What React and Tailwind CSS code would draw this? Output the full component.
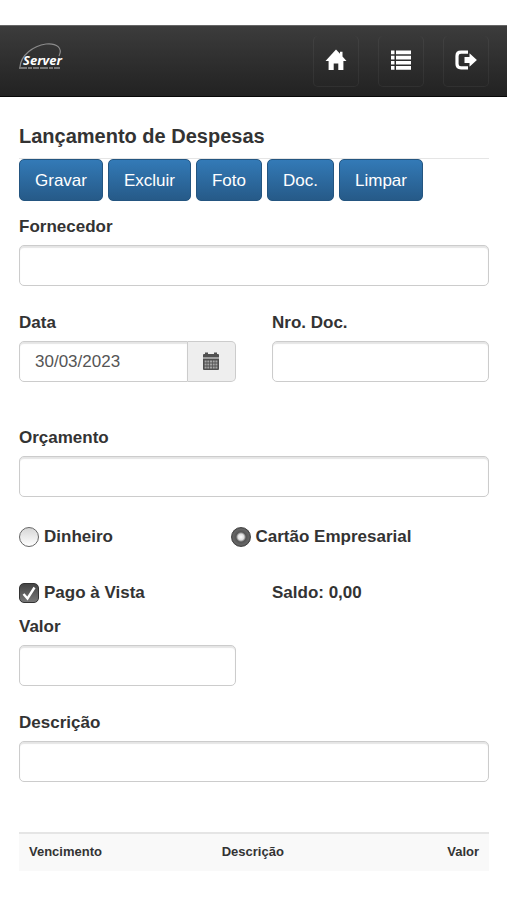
import React, { useState } from 'react';

const inputClass =
    'h-[41px] w-full min-w-0 rounded-[5px] border border-[#ccc] bg-white px-[15px] text-[17px] text-[#555] shadow-[inset_0_2px_1px_rgba(0,0,0,0.1)] outline-none focus:border-[#66afe9]';
const navButtonClass =
    'flex h-[51px] w-[46px] items-center justify-center rounded-[5px] border border-t-0 border-white/5 pb-0.5 text-white hover:bg-black/20';

function Logo() {
    return (
        <svg width="46" height="30" viewBox="0 0 46 30" role="img" aria-label="Server">
            <path
                d="M1 25 C2 13 14 4 27 2 C38 1 44 6 40 14"
                fill="none"
                stroke="#8b8b8b"
                strokeWidth="1.2"
            />
            <text
                x="4"
                y="23"
                fill="#fff"
                fontFamily="'Open Sans', 'Noto Sans', sans-serif"
                fontSize="13"
                fontWeight="700"
                fontStyle="italic"
            >
                Server
            </text>
            <path d="M0 26 H42" stroke="#777" strokeWidth="2" strokeDasharray="8 1 4 1 6 1" />
        </svg>
    );
}

function HomeIcon() {
    return (
        <svg width="22" height="22" viewBox="0 0 22 22" fill="currentColor" aria-hidden="true">
            <path d="M11 .5 L15 4.7 V2.8 H17.5 V7.4 L21.5 12 H18.4 V21 H13.3 V14.5 H8.7 V21 H3.6 V12 H.5 Z" />
        </svg>
    );
}

function ListIcon() {
    return (
        <svg width="20" height="20" viewBox="0 0 20 20" fill="currentColor" aria-hidden="true">
            <path d="M0 .5h3.5v3.7H0zM5 .5h15v3.7H5zM0 5.7h3.5v3.7H0zM5 5.7h15v3.7H5zM0 10.9h3.5v3.7H0zM5 10.9h15v3.7H5zM0 16.1h3.5v3.7H0zM5 16.1h15v3.7H5z" />
        </svg>
    );
}

function LogoutIcon() {
    return (
        <svg width="22" height="20" viewBox="0 0 22 20" aria-hidden="true">
            <path
                d="M13 2.2 H6 Q2 2.2 2 6 V14 Q2 17.8 6 17.8 H13"
                fill="none"
                stroke="currentColor"
                strokeWidth="3.2"
            />
            <path d="M9.5 7 H14.5 V3.3 L21.9 10 L14.5 16.7 V13 H9.5 Z" fill="currentColor" />
        </svg>
    );
}

function CalendarIcon() {
    return (
        <svg width="18" height="19" viewBox="0 0 18 19" aria-hidden="true">
            <path
                d="M1 3 Q1 2 2 2 H3 V.5 H6 V2 H12 V.5 H15 V2 H16 Q17 2 17 3 V5.5 H1 Z M1 6.5 H17 V17 Q17 18 16 18 H2 Q1 18 1 17 Z"
                fill="#505050"
            />
            <path
                d="M2.6 9.5 H15.6 M2.6 12.5 H15.6 M2.6 15.5 H15.6"
                stroke="#a5a5a5"
                strokeWidth="2"
                strokeDasharray="2 .7"
            />
        </svg>
    );
}

function Field({ id, label, className = '', children }) {
    return (
        <div className={className}>
            <label htmlFor={id} className="mb-1.5 block font-bold">{label}</label>
            {children || <input id={id} name={id} type="text" className={inputClass} />}
        </div>
    );
}

function Radio({ value, label, selected, onSelect }) {
    return (
        <label className="flex items-center gap-[5px] font-bold">
            <input
                type="radio"
                name="pagamento"
                value={value}
                checked={selected === value}
                onChange={() => onSelect(value)}
                className="h-5 w-5 shrink-0 appearance-none rounded-full border border-[#666] bg-linear-to-b from-[#d6d6d6] to-white checked:border-[#444] checked:bg-[radial-gradient(circle,#fff_0,#ddd_3px,#555_5px,#666_8px,#444_10px)]"
            />
            {label}
        </label>
    );
}

export default function App() {
    const [date, setDate] = useState('30/03/2023');
    const [payment, setPayment] = useState('cartao');
    const [paid, setPaid] = useState(true);

    return (
        <div className="min-h-screen bg-white pt-[25px] font-['Liberation_Sans',Arial,sans-serif] text-[17px] leading-6 text-[#333]">
            <header className="flex h-[72px] items-center justify-between border-t border-b border-t-[#666] border-b-[#080808] bg-linear-to-b from-[#3c3c3c] to-[#222] pr-[18px] pl-[19px]">
                <a href="#" className="pb-2"><Logo /></a>
                <nav className="flex gap-[19px]">
                    <button type="button" aria-label="Início" className={navButtonClass}><HomeIcon /></button>
                    <button type="button" aria-label="Lista" className={navButtonClass}><ListIcon /></button>
                    <button type="button" aria-label="Sair" className={navButtonClass}><LogoutIcon /></button>
                </nav>
            </header>

            <main className="pt-[27px] pr-[18px] pl-[19px]">
                <h1 className="border-b border-[#e5e5e5] pb-[10px] text-[20px] font-bold">Lançamento de Despesas</h1>

                <form onSubmit={(e) => e.preventDefault()}>
                    <div className="flex flex-wrap gap-[5px]">
                        {['Gravar', 'Excluir', 'Foto', 'Doc.', 'Limpar'].map((name) => (
                            <button
                                key={name}
                                type="button"
                                className="h-[42px] rounded-[5px] border border-[#245580] bg-linear-to-b from-[#337ab7] to-[#265a88] px-[15px] pt-0.5 text-white hover:to-[#337ab7]"
                            >
                                {name}
                            </button>
                        ))}
                    </div>

                    <Field id="fornecedor" label="Fornecedor" className="mt-3.5" />

                    <div className="mt-[25px] grid grid-cols-2 gap-9">
                        <Field id="data" label="Data">
                            <div className="flex">
                                <input
                                    id="data"
                                    name="data"
                                    type="text"
                                    value={date}
                                    onChange={(e) => setDate(e.target.value)}
                                    className={`${inputClass} rounded-r-none`}
                                />
                                <button
                                    type="button"
                                    aria-label="Escolher data"
                                    className="flex w-12 shrink-0 items-center justify-center rounded-r-[5px] border border-l-0 border-[#ccc] bg-[#eee] pr-0.5"
                                >
                                    <CalendarIcon />
                                </button>
                            </div>
                        </Field>
                        <Field id="nroDoc" label="Nro. Doc." />
                    </div>

                    <Field id="orcamento" label="Orçamento" className="mt-11" />

                    <div className="mt-7 grid grid-cols-[45%_55%]">
                        <Radio value="dinheiro" label="Dinheiro" selected={payment} onSelect={setPayment} />
                        <Radio value="cartao" label="Cartão Empresarial" selected={payment} onSelect={setPayment} />
                    </div>

                    <div className="mt-8 grid grid-cols-2 gap-9">
                        <label className="flex items-center gap-[5px] font-bold">
                            <span className="grid h-5 w-5 shrink-0">
                                <input
                                    type="checkbox"
                                    name="pago"
                                    checked={paid}
                                    onChange={(e) => setPaid(e.target.checked)}
                                    className="col-start-1 row-start-1 h-5 w-5 appearance-none rounded-[5px] border border-[#555] bg-linear-to-b from-[#e5e5e5] to-white checked:border-[#333] checked:from-[#444] checked:to-[#777]"
                                />
                                {paid && (
                                    <svg viewBox="0 0 20 20" aria-hidden="true" className="pointer-events-none col-start-1 row-start-1 h-5 w-5">
                                        <path d="M4.5 11 L8.5 15.5 L15.5 4.5" fill="none" stroke="#fff" strokeWidth="2.4" />
                                    </svg>
                                )}
                            </span>
                            Pago à Vista
                        </label>
                        <p className="font-bold">Saldo: 0,00</p>
                    </div>

                    <div className="mt-[10px] grid grid-cols-2 gap-9">
                        <Field id="valor" label="Valor" />
                    </div>

                    <Field id="descricao" label="Descrição" className="mt-[25px]" />
                </form>

                <table className="mt-[50px] w-full table-fixed text-[13px] leading-5">
                    <thead>
                        <tr className="border-t-2 border-[#e5e5e5] bg-[#f9f9f9]">
                            <th className="w-[41%] px-[10px] pt-2 pb-[9px] text-left font-bold">Vencimento</th>
                            <th className="px-[10px] pt-2 pb-[9px] text-left font-bold">Descrição</th>
                            <th className="px-[10px] pt-2 pb-[9px] text-right font-bold">Valor</th>
                        </tr>
                    </thead>
                </table>
            </main>
        </div>
    );
}
